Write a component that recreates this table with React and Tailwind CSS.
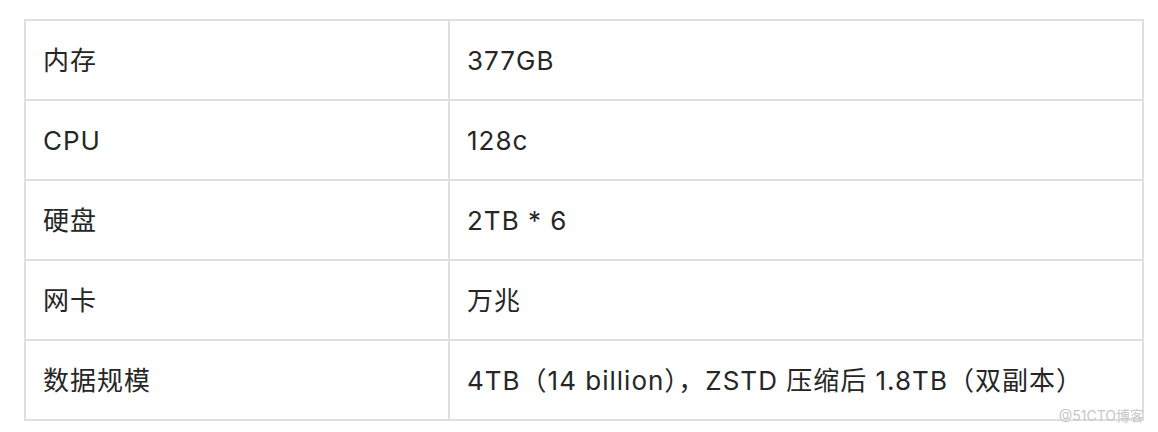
export default function App() {
  const rows = [
    ['内存', '377GB'],
    ['CPU', '128c'],
    ['硬盘', '2TB * 6'],
    ['网卡', '万兆'],
    ['数据规模', '4TB（14 billion），ZSTD 压缩后 1.8TB（双副本）'],
  ];

  return (
    <div
      className="relative w-[1158px] h-[432px] bg-white pt-[19px] pl-[24px]"
      style={{ fontFamily: 'Inter, "Noto Sans CJK SC", sans-serif' }}
    >
      <table className="border-collapse w-[1120px] text-[26px] tracking-[1px] text-[#262626]">
        <tbody>
          {rows.map(([k, v]) => (
            <tr key={k} className="h-[80px]">
              <td className="w-[424px] border-2 border-[#dfdfe3] px-[17px] align-middle">{k}</td>
              <td className="border-2 border-[#dfdfe3] px-[17px] align-middle">{v}</td>
            </tr>
          ))}
        </tbody>
      </table>
      <span className="absolute right-[14px] top-[405px] text-[14px] text-[#c6c6ca]">
        @51CTO博客
      </span>
    </div>
  );
}
